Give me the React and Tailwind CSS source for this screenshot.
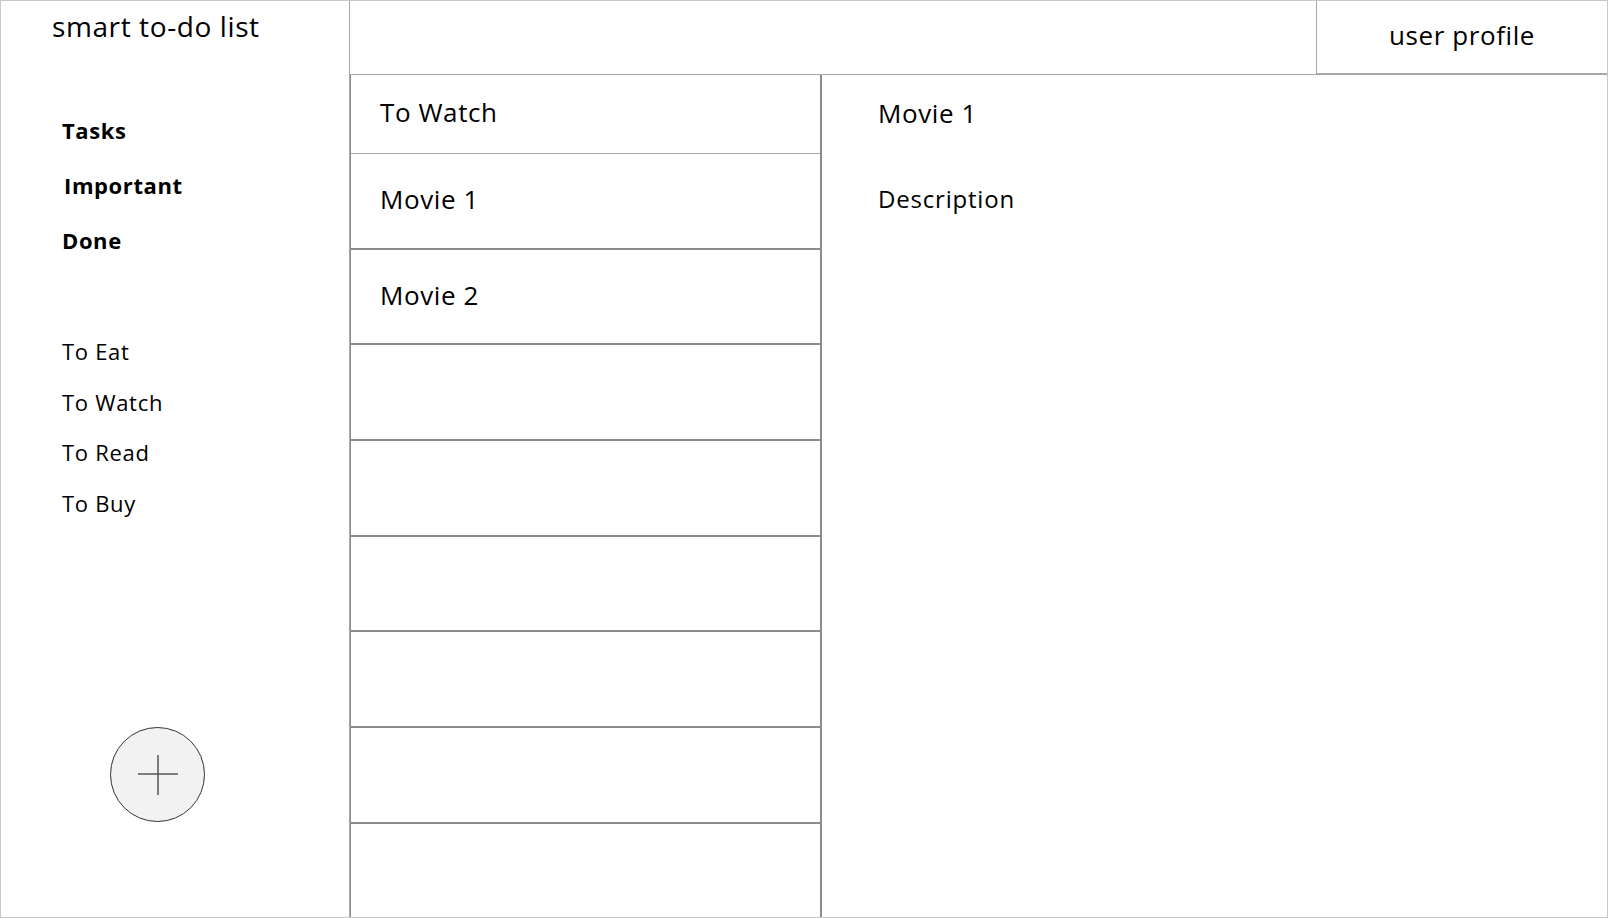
import React from "react";

const font = { fontFamily: '"Open Sans", "Liberation Sans", sans-serif' };

function PlusButton() {
  return (
    <button className="w-[95px] h-[95px] rounded-full bg-[#f2f2f2] border border-[#333] flex items-center justify-center">
      <svg width="40" height="40" viewBox="0 0 40 40">
        <line x1="20" y1="0" x2="20" y2="40" stroke="#555" strokeWidth="1.5" />
        <line x1="0" y1="19" x2="40" y2="19" stroke="#555" strokeWidth="1.5" />
      </svg>
    </button>
  );
}

export default function App() {
  const rows = ["Movie 1", "Movie 2", "", "", "", "", "", ""];
  return (
    <div
      className="w-[1608px] h-[918px] flex bg-white text-black border border-[#c8c8c8] overflow-hidden"
      style={font}
    >
      <aside className="w-[349px] shrink-0 h-full border-r border-[#a8a8a8] flex flex-col">
        <div className="h-[54px] pl-[51px] pt-[6px] text-[28px] leading-[38px] tracking-[0.6px]">
          smart to-do list
        </div>
        <nav className="pl-[61px] pt-[61px] flex flex-col gap-[26px] font-bold text-[22px] leading-[29px] tracking-[0.6px]">
          <div>Tasks</div>
          <div className="pl-[2px]">Important</div>
          <div>Done</div>
        </nav>
        <div className="pl-[61px] pt-[82px] flex flex-col gap-[21.6px] text-[22px] leading-[29px] tracking-[0.7px]">
          <div>To Eat</div>
          <div>To Watch</div>
          <div>To Read</div>
          <div>To Buy</div>
        </div>
        <div className="flex-1" />
        <div className="pl-[109px] pb-[95px]">
          <PlusButton />
        </div>
      </aside>
      <div className="flex-1 flex flex-col min-w-0">
        <header className="h-[74px] shrink-0 border-b border-[#a8a8a8] flex justify-end">
          <div className="w-[291px] h-[73px] border-l border-b border-[#a8a8a8] flex items-center justify-center text-[26px] tracking-[0.6px] pb-[4px]">
            user profile
          </div>
        </header>
        <div className="flex-1 flex min-h-0">
          <section className="w-[472px] shrink-0 border-r-2 border-l border-[#8c8c8c] flex flex-col text-[26px] tracking-[0.6px]">
            <div className="h-[79px] shrink-0 border-b border-[#a8a8a8] flex items-center pl-[29px] pb-[4px]">
              To Watch
            </div>
            {rows.map((r, i) => (
              <div
                key={i}
                className={
                  i < rows.length - 1
                    ? "h-[95.7px] shrink-0 border-b-2 border-[#8c8c8c] flex items-center pl-[29px] pb-[2px]"
                    : "flex-1 flex items-center pl-[29px]"
                }
              >
                {r}
              </div>
            ))}
          </section>
          <section className="flex-1 pl-[56px] flex flex-col">
            <div className="h-[78px] flex items-center text-[26px] tracking-[0.6px] pb-[1px]">Movie 1</div>
            <div className="h-[95px] flex items-center text-[24px] tracking-[0.8px] pb-[3px]">Description</div>
          </section>
        </div>
      </div>
    </div>
  );
}
